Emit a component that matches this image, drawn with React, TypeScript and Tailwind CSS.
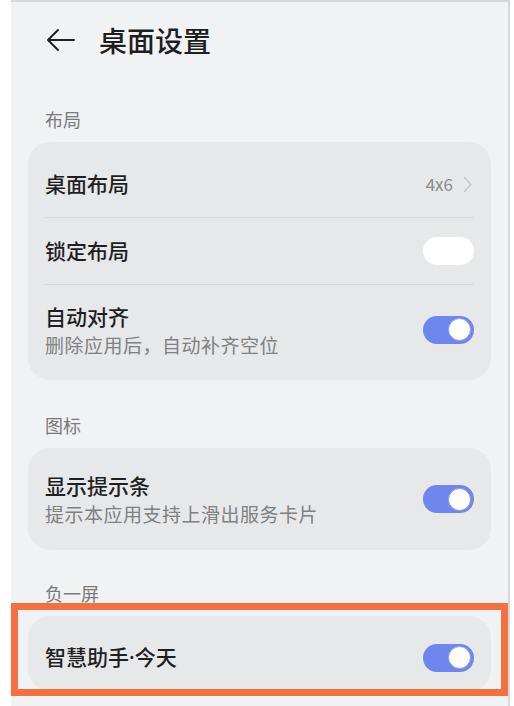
import React from "react";

const font = { fontFamily: '"Noto Sans CJK SC", "Noto Sans", sans-serif' };

const Toggle = ({ on }: { on: boolean }) =>
  on ? (
    <div className="flex h-[28px] w-[51px] items-center justify-end rounded-full bg-[#6f86ee] pr-[3px]">
      <div className="h-[23px] w-[23px] rounded-full border border-[#8d9ce8] bg-white" />
    </div>
  ) : (
    <div className="h-[28px] w-[51px] rounded-full bg-white" />
  );

const Label = ({ text, pt }: { text: string; pt: string }) => (
  <div className={`${pt} pb-[11px] pl-[34px] text-[18px] leading-[24px] text-[#7a7a7a]`}>{text}</div>
);

export default function App() {
  return (
    <div className="relative h-[706px] w-[514px] overflow-hidden bg-white" style={font}>
      <div className="ml-[11px] h-full w-[499px] border-t-2 border-r-2 border-[#d6d7d9] bg-[#f1f2f4]">
        {/* header */}
        <div className="flex h-[75px] items-center pl-[35px]">
          <svg width="30" height="24" viewBox="0 0 30 24" fill="none" stroke="#222" strokeWidth="2" strokeLinecap="round" strokeLinejoin="round">
            <path d="M28 12H3M12 2L2 12l10 10" />
          </svg>
          <span className="ml-[23px] text-[28px] font-medium text-[#1e1e1e]">桌面设置</span>
        </div>

        <Label text="布局" pt="pt-[30px]" />
        <div className="mx-[17px] rounded-[22px] bg-[#e7e8ea] px-[17px] pt-[9px] pb-[6px]">
          <div className="flex h-[67px] items-center justify-between border-b border-[#d9dadc]">
            <span className="text-[21px] font-medium text-[#1f1f1f]">桌面布局</span>
            <div className="flex items-center gap-[10px] pr-[2px]">
              <span className="text-[17px] text-[#8a8a8a]">4x6</span>
              <svg width="9" height="17" viewBox="0 0 9 17" fill="none" stroke="#c2c2c2" strokeWidth="1.2">
                <path d="M1 1l7 7.5L1 16" />
              </svg>
            </div>
          </div>
          <div className="flex h-[67px] items-center justify-between border-b border-[#d9dadc]">
            <span className="text-[21px] font-medium text-[#1f1f1f]">锁定布局</span>
            <Toggle on={false} />
          </div>
          <div className="flex h-[89px] items-center justify-between">
            <div className="flex flex-col">
              <span className="text-[21px] font-medium leading-[30px] text-[#1f1f1f]">自动对齐</span>
              <span className="text-[19px] leading-[28px] tracking-[0.5px] text-[#808080]">删除应用后，自动补齐空位</span>
            </div>
            <Toggle on />
          </div>
        </div>

        <Label text="图标" pt="pt-[33px]" />
        <div className="mx-[17px] flex h-[102px] items-center justify-between rounded-[22px] bg-[#e7e8ea] px-[17px]">
          <div className="flex flex-col">
            <span className="text-[21px] font-medium leading-[30px] text-[#1f1f1f]">显示提示条</span>
            <span className="text-[19px] leading-[28px] tracking-[0.5px] text-[#808080]">提示本应用支持上滑出服务卡片</span>
          </div>
          <Toggle on />
        </div>

        <Label text="负一屏" pt="pt-[31px]" />
        <div className="mx-[17px] rounded-[22px] bg-[#e7e8ea] px-[17px] pt-[8px]">
          <div className="flex h-[67px] items-center justify-between">
            <span className="text-[21px] font-medium text-[#1f1f1f]">
              智慧助手<span className="font-['Noto_Sans']">·</span>今天
            </span>
            <Toggle on />
          </div>
        </div>
      </div>

      {/* highlight frame */}
      <div className="absolute left-[11px] top-[603px] h-[93px] w-[497px] border-[7px] border-[#f4703f]" />
    </div>
  );
}
